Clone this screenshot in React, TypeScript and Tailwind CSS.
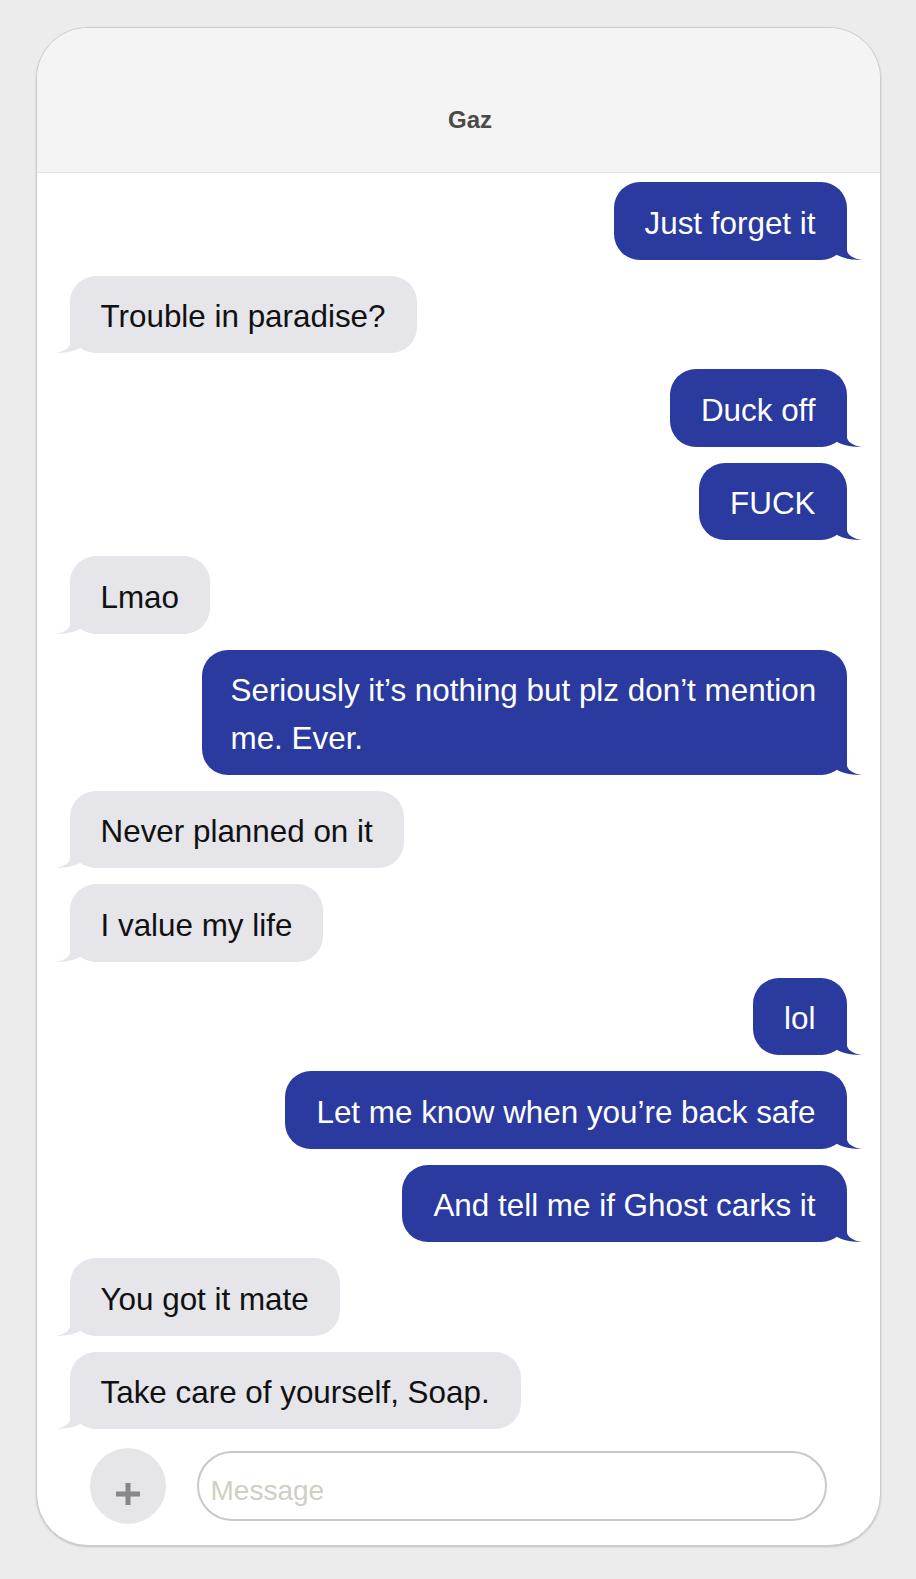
import React from "react";

type Msg = { text: string; me: boolean; wide?: boolean };

const messages: Msg[] = [
  { text: "Just forget it", me: true },
  { text: "Trouble in paradise?", me: false },
  { text: "Duck off", me: true },
  { text: "FUCK", me: true },
  { text: "Lmao", me: false },
  { text: "Seriously it’s nothing but plz don’t mention me. Ever.", me: true, wide: true },
  { text: "Never planned on it", me: false },
  { text: "I value my life", me: false },
  { text: "lol", me: true },
  { text: "Let me know when you’re back safe", me: true },
  { text: "And tell me if Ghost carks it", me: true },
  { text: "You got it mate", me: false },
  { text: "Take care of yourself, Soap.", me: false },
];

// little curl under the bubble, drawn for the right side and mirrored for the left
function Tail({ me }: { me: boolean }) {
  return (
    <svg
      width="40"
      height="28"
      viewBox="0 0 40 28"
      className={
        me
          ? "absolute bottom-0 right-[-17px] text-[#2a3a9e]"
          : "absolute bottom-0 left-[-17px] -scale-x-100 text-[#e5e5ea]"
      }
    >
      <path
        d="M23 0 L23 18 C23 22.5 29 27.2 38.5 27.8 C30 28.4 18 27 8 20 L8 0 Z"
        fill="currentColor"
      />
    </svg>
  );
}

function Bubble({ msg }: { msg: Msg }) {
  return (
    <div
      className={`relative max-w-[645px] rounded-[26px] pt-[17.5px] pb-[12.5px] text-[31.4px] leading-[47.5px] ${
        msg.wide ? "px-[29px]" : "px-[31px]"
      } ${msg.me ? "self-end bg-[#2a3a9e] text-white" : "self-start bg-[#e5e5ea] text-[#111]"}`}
    >
      <span className="relative z-10">{msg.text}</span>
      <Tail me={msg.me} />
    </div>
  );
}

export default function App() {
  return (
    <div className="min-h-[1579px] w-full bg-[#ececec] pt-[27px] font-['Liberation_Sans',Arial,sans-serif]">
      <div className="mx-auto flex h-[1519px] w-[845px] flex-col overflow-hidden rounded-[52px] border border-[#cbcbcb] bg-white shadow-[0_1px_2px_rgba(0,0,0,0.18)]">
        {/* Header */}
        <div className="flex h-[145px] shrink-0 items-end justify-center border-b border-[#e6e6e6] bg-[#f4f4f4] pb-[38px] pl-[24px]">
          <span className="text-[24px] font-bold leading-[28px] text-[#4a4a4a]">Gaz</span>
        </div>

        {/* Messages */}
        <div className="flex flex-1 flex-col gap-[16px] overflow-hidden px-[33px] pt-[9px]">
          {messages.map((m, i) => (
            <Bubble key={i} msg={m} />
          ))}
        </div>

        {/* Composer */}
        <div className="flex shrink-0 items-center gap-[31px] px-[53px] pb-[21px]">
          <button className="flex h-[76px] w-[76px] shrink-0 items-center justify-center rounded-full bg-[#e6e6e9] pt-[16px]">
            <svg width="24" height="22" viewBox="0 0 24 22">
              <rect x="0" y="8.5" width="24" height="5" fill="#86868b" />
              <rect x="9.5" y="0" width="5" height="22" fill="#86868b" />
            </svg>
          </button>
          <div className="flex h-[70px] flex-1 items-center rounded-full border-2 border-[#c8c8c8] px-[12px] pt-[9px]">
            <span className="text-[28px] text-[#cfcfc4]">Message</span>
          </div>
        </div>
      </div>
    </div>
  );
}
